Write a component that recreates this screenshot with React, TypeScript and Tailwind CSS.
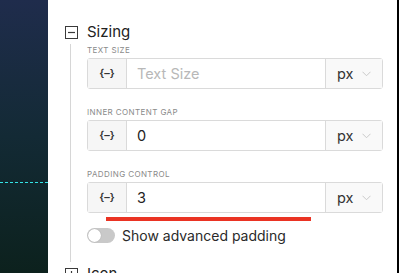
import React from 'react'

type Field = {
  label: string
  value?: string
  placeholder?: string
  underline?: boolean
}

const fields: Field[] = [
  { label: 'Text Size', placeholder: 'Text Size' },
  { label: 'Inner Content Gap', value: '0' },
  { label: 'Padding Control', value: '3', underline: true }
]

const Chevron = () => (
  <svg width="9" height="6" viewBox="0 0 9 6" fill="none" className="shrink-0">
    <path d="M0.5 0.75 L4.5 4.75 L8.5 0.75" stroke="#c4c4c4" strokeWidth="0.9" />
  </svg>
)

const BoxIcon = ({ open }: { open: boolean }) => (
  <svg width="13" height="13" viewBox="0 0 13 13" fill="none" className="shrink-0">
    <rect x="0.5" y="0.5" width="12" height="12" stroke="#3a3a3a" strokeWidth="1" />
    <path d="M3 6.5 H10" stroke="#3a3a3a" strokeWidth="1.2" />
    {!open && <path d="M6.5 3 V10" stroke="#3a3a3a" strokeWidth="1.2" />}
  </svg>
)

const FieldRow = ({ field }: { field: Field }) => (
  <div className="flex flex-col">
    <div className="h-[12px] text-[8px] leading-[12px] tracking-[0.4px] uppercase text-[#8a8a8a]">
      {field.label}
    </div>
    <div className="mt-[2px] flex h-[31px] w-[296px] rounded-[3px] border border-[#dadada]">
      <div className="flex w-[39px] items-center justify-center border-r border-[#dadada] bg-[#f6f6f6] text-[11px] font-semibold text-[#333]">
        {'{–}'}
      </div>
      <div className="flex flex-1 items-center pl-[10px] text-[14.5px]">
        {field.value ? (
          <span className="text-[#222]">{field.value}</span>
        ) : (
          <span className="text-[#b8b8b8]">{field.placeholder}</span>
        )}
      </div>
      <div className="flex w-[57px] items-center gap-[9px] border-l border-[#dadada] bg-[#f9f9f9] pl-[11px] text-[14.5px] text-[#333]">
        <span>px</span>
        <Chevron />
      </div>
    </div>
    {field.underline && <div className="ml-[19px] mt-[4px] h-[4px] w-[205px] bg-[#ea3323]" />}
  </div>
)

export default function App() {
  return (
    <div
      className="flex h-[273px] w-[399px] overflow-hidden bg-white"
      style={{ fontFamily: 'Inter, "Noto Sans", sans-serif' }}
    >
      <div className="w-[48px] shrink-0 bg-gradient-to-b from-[#1f2c4c] via-[#132a35] to-[#0c211d] pt-[182px]">
        <div className="border-t border-dashed border-[#33e3e6]" />
      </div>
      <div className="flex-1 border-r-2 border-black pl-[17px] pt-[22px]">
        <div className="flex h-[20px] items-center gap-[9px]">
          <BoxIcon open />
          <span className="text-[15px] leading-[20px] text-[#222]">Sizing</span>
        </div>
        <div className="ml-[5px] mt-[2px] flex flex-col gap-[17px] border-l border-[#d6d6d6] pb-[19px] pl-[16px]">
          {fields.map(field => (
            <FieldRow key={field.label} field={field} />
          ))}
          <div className="-mt-[10px] flex h-[15px] items-center gap-[7px]">
            <div className="flex h-[15px] w-[28px] items-center rounded-full bg-[#c9c9c9] px-[1px]">
              <div className="h-[13px] w-[13px] rounded-full bg-white shadow-[0_0_1px_rgba(0,0,0,0.3)]" />
            </div>
            <span className="text-[14px] leading-[15px] text-[#2a2a2a]">Show advanced padding</span>
          </div>
        </div>
        <div className="mt-[2px] flex h-[20px] items-center gap-[9px]">
          <BoxIcon open={false} />
          <span className="text-[15px] leading-[20px] text-[#222]">Icon</span>
        </div>
      </div>
    </div>
  )
}
